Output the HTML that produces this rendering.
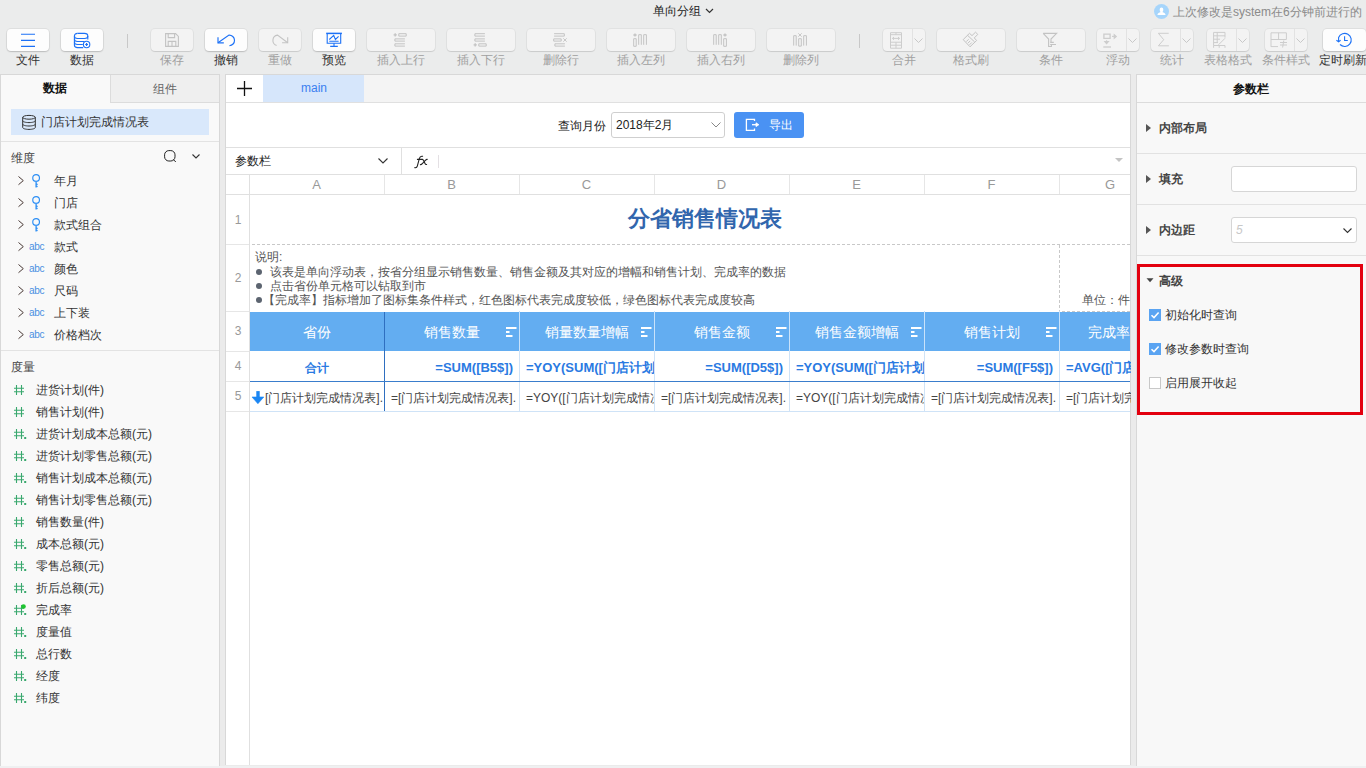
<!DOCTYPE html><html><head><meta charset="utf-8"><style>
*{box-sizing:border-box;margin:0;padding:0}
html,body{width:1366px;height:768px;overflow:hidden;background:#ebebeb;font-family:"Liberation Sans",sans-serif;font-size:12px;color:#333}
.a{position:absolute;white-space:nowrap}
svg.a{overflow:visible}
</style></head><body><div class="a" style="left:0px;top:0px;width:1366px;height:74px;background:#ebecec"></div>
<div class="a" style="left:577px;width:200px;text-align:center;top:1px;height:20px;line-height:20px;font-size:12px;color:#222;font-weight:normal;">单向分组</div>
<svg class="a" style="left:705px;top:8px;" width="9" height="6" viewBox="0 0 9 6"><path d="M1 1L4.5 4.5L8 1" fill="none" stroke="#333" stroke-width="1.2"/></svg>
<svg class="a" style="left:1154px;top:4px;" width="15" height="15" viewBox="0 0 15 15"><circle cx="7.5" cy="7.5" r="7.5" fill="#a6d5fb"/><path d="M7.5 3.6c1.1 0 1.8.9 1.8 2.1 0 1-.5 1.9-1 2.4 1.6.4 3 1.3 3.3 3H3.4c.3-1.7 1.7-2.6 3.3-3-.5-.5-1-1.4-1-2.4 0-1.2.7-2.1 1.8-2.1z" fill="#fff"/></svg>
<div class="a " style="left:1173px;top:2px;height:20px;line-height:20px;font-size:12px;color:#8a8a8a;font-weight:normal;">上次修改是system在6分钟前进行的</div>
<div class="a" style="left:7px;top:29px;width:42px;height:22px;background:#fdfdfd;border-radius:4px;box-shadow:0 0 0 1px rgba(0,0,0,.05),0 1px 1.5px rgba(0,0,0,.16)"></div>
<div class="a" style="left:-72.0px;width:200px;text-align:center;top:50px;height:20px;line-height:20px;font-size:12px;color:#333;font-weight:normal;">文件</div>
<div class="a" style="left:61px;top:29px;width:42px;height:22px;background:#fdfdfd;border-radius:4px;box-shadow:0 0 0 1px rgba(0,0,0,.05),0 1px 1.5px rgba(0,0,0,.16)"></div>
<div class="a" style="left:-18.0px;width:200px;text-align:center;top:50px;height:20px;line-height:20px;font-size:12px;color:#333;font-weight:normal;">数据</div>
<div class="a" style="left:151px;top:29px;width:42px;height:22px;background:#f3f3f3;border-radius:4px;box-shadow:0 0 0 1px rgba(0,0,0,.04),0 1px 1px rgba(0,0,0,.10)"></div>
<div class="a" style="left:72.0px;width:200px;text-align:center;top:50px;height:20px;line-height:20px;font-size:12px;color:#a0a0a0;font-weight:normal;">保存</div>
<div class="a" style="left:205px;top:29px;width:42px;height:22px;background:#fdfdfd;border-radius:4px;box-shadow:0 0 0 1px rgba(0,0,0,.05),0 1px 1.5px rgba(0,0,0,.16)"></div>
<div class="a" style="left:126.0px;width:200px;text-align:center;top:50px;height:20px;line-height:20px;font-size:12px;color:#333;font-weight:normal;">撤销</div>
<div class="a" style="left:259px;top:29px;width:42px;height:22px;background:#f3f3f3;border-radius:4px;box-shadow:0 0 0 1px rgba(0,0,0,.04),0 1px 1px rgba(0,0,0,.10)"></div>
<div class="a" style="left:180.0px;width:200px;text-align:center;top:50px;height:20px;line-height:20px;font-size:12px;color:#a0a0a0;font-weight:normal;">重做</div>
<div class="a" style="left:313px;top:29px;width:42px;height:22px;background:#fdfdfd;border-radius:4px;box-shadow:0 0 0 1px rgba(0,0,0,.05),0 1px 1.5px rgba(0,0,0,.16)"></div>
<div class="a" style="left:234.0px;width:200px;text-align:center;top:50px;height:20px;line-height:20px;font-size:12px;color:#333;font-weight:normal;">预览</div>
<div class="a" style="left:367px;top:29px;width:68px;height:22px;background:#f3f3f3;border-radius:4px;box-shadow:0 0 0 1px rgba(0,0,0,.04),0 1px 1px rgba(0,0,0,.10)"></div>
<div class="a" style="left:301.0px;width:200px;text-align:center;top:50px;height:20px;line-height:20px;font-size:12px;color:#a0a0a0;font-weight:normal;">插入上行</div>
<div class="a" style="left:447px;top:29px;width:68px;height:22px;background:#f3f3f3;border-radius:4px;box-shadow:0 0 0 1px rgba(0,0,0,.04),0 1px 1px rgba(0,0,0,.10)"></div>
<div class="a" style="left:381.0px;width:200px;text-align:center;top:50px;height:20px;line-height:20px;font-size:12px;color:#a0a0a0;font-weight:normal;">插入下行</div>
<div class="a" style="left:527px;top:29px;width:68px;height:22px;background:#f3f3f3;border-radius:4px;box-shadow:0 0 0 1px rgba(0,0,0,.04),0 1px 1px rgba(0,0,0,.10)"></div>
<div class="a" style="left:461.0px;width:200px;text-align:center;top:50px;height:20px;line-height:20px;font-size:12px;color:#a0a0a0;font-weight:normal;">删除行</div>
<div class="a" style="left:607px;top:29px;width:68px;height:22px;background:#f3f3f3;border-radius:4px;box-shadow:0 0 0 1px rgba(0,0,0,.04),0 1px 1px rgba(0,0,0,.10)"></div>
<div class="a" style="left:541.0px;width:200px;text-align:center;top:50px;height:20px;line-height:20px;font-size:12px;color:#a0a0a0;font-weight:normal;">插入左列</div>
<div class="a" style="left:687px;top:29px;width:68px;height:22px;background:#f3f3f3;border-radius:4px;box-shadow:0 0 0 1px rgba(0,0,0,.04),0 1px 1px rgba(0,0,0,.10)"></div>
<div class="a" style="left:621.0px;width:200px;text-align:center;top:50px;height:20px;line-height:20px;font-size:12px;color:#a0a0a0;font-weight:normal;">插入右列</div>
<div class="a" style="left:767px;top:29px;width:68px;height:22px;background:#f3f3f3;border-radius:4px;box-shadow:0 0 0 1px rgba(0,0,0,.04),0 1px 1px rgba(0,0,0,.10)"></div>
<div class="a" style="left:701.0px;width:200px;text-align:center;top:50px;height:20px;line-height:20px;font-size:12px;color:#a0a0a0;font-weight:normal;">删除列</div>
<div class="a" style="left:883px;top:29px;width:42px;height:22px;background:#f3f3f3;border-radius:4px;box-shadow:0 0 0 1px rgba(0,0,0,.04),0 1px 1px rgba(0,0,0,.10)"></div>
<div class="a" style="left:912px;top:29px;width:1px;height:22px;background:#e2e2e2"></div>
<svg class="a" style="left:914px;top:38px;" width="9" height="5" viewBox="0 0 9 5"><path d="M.5 .5L4.5 4.5L8.5 .5" fill="none" stroke="#c8c8c8" stroke-width="1"/></svg>
<div class="a" style="left:804.0px;width:200px;text-align:center;top:50px;height:20px;line-height:20px;font-size:12px;color:#a0a0a0;font-weight:normal;">合并</div>
<div class="a" style="left:937px;top:29px;width:68px;height:22px;background:#f3f3f3;border-radius:4px;box-shadow:0 0 0 1px rgba(0,0,0,.04),0 1px 1px rgba(0,0,0,.10)"></div>
<div class="a" style="left:871.0px;width:200px;text-align:center;top:50px;height:20px;line-height:20px;font-size:12px;color:#a0a0a0;font-weight:normal;">格式刷</div>
<div class="a" style="left:1017px;top:29px;width:68px;height:22px;background:#f3f3f3;border-radius:4px;box-shadow:0 0 0 1px rgba(0,0,0,.04),0 1px 1px rgba(0,0,0,.10)"></div>
<div class="a" style="left:951.0px;width:200px;text-align:center;top:50px;height:20px;line-height:20px;font-size:12px;color:#a0a0a0;font-weight:normal;">条件</div>
<div class="a" style="left:1097px;top:29px;width:42px;height:22px;background:#f3f3f3;border-radius:4px;box-shadow:0 0 0 1px rgba(0,0,0,.04),0 1px 1px rgba(0,0,0,.10)"></div>
<div class="a" style="left:1126px;top:29px;width:1px;height:22px;background:#e2e2e2"></div>
<svg class="a" style="left:1128px;top:38px;" width="9" height="5" viewBox="0 0 9 5"><path d="M.5 .5L4.5 4.5L8.5 .5" fill="none" stroke="#c8c8c8" stroke-width="1"/></svg>
<div class="a" style="left:1018.0px;width:200px;text-align:center;top:50px;height:20px;line-height:20px;font-size:12px;color:#a0a0a0;font-weight:normal;">浮动</div>
<div class="a" style="left:1151px;top:29px;width:42px;height:22px;background:#f3f3f3;border-radius:4px;box-shadow:0 0 0 1px rgba(0,0,0,.04),0 1px 1px rgba(0,0,0,.10)"></div>
<div class="a" style="left:1180px;top:29px;width:1px;height:22px;background:#e2e2e2"></div>
<svg class="a" style="left:1182px;top:38px;" width="9" height="5" viewBox="0 0 9 5"><path d="M.5 .5L4.5 4.5L8.5 .5" fill="none" stroke="#c8c8c8" stroke-width="1"/></svg>
<div class="a" style="left:1072.0px;width:200px;text-align:center;top:50px;height:20px;line-height:20px;font-size:12px;color:#a0a0a0;font-weight:normal;">统计</div>
<div class="a" style="left:1207px;top:29px;width:42px;height:22px;background:#f3f3f3;border-radius:4px;box-shadow:0 0 0 1px rgba(0,0,0,.04),0 1px 1px rgba(0,0,0,.10)"></div>
<div class="a" style="left:1236px;top:29px;width:1px;height:22px;background:#e2e2e2"></div>
<svg class="a" style="left:1238px;top:38px;" width="9" height="5" viewBox="0 0 9 5"><path d="M.5 .5L4.5 4.5L8.5 .5" fill="none" stroke="#c8c8c8" stroke-width="1"/></svg>
<div class="a" style="left:1128.0px;width:200px;text-align:center;top:50px;height:20px;line-height:20px;font-size:12px;color:#a0a0a0;font-weight:normal;">表格格式</div>
<div class="a" style="left:1265px;top:29px;width:42px;height:22px;background:#f3f3f3;border-radius:4px;box-shadow:0 0 0 1px rgba(0,0,0,.04),0 1px 1px rgba(0,0,0,.10)"></div>
<div class="a" style="left:1294px;top:29px;width:1px;height:22px;background:#e2e2e2"></div>
<svg class="a" style="left:1296px;top:38px;" width="9" height="5" viewBox="0 0 9 5"><path d="M.5 .5L4.5 4.5L8.5 .5" fill="none" stroke="#c8c8c8" stroke-width="1"/></svg>
<div class="a" style="left:1186.0px;width:200px;text-align:center;top:50px;height:20px;line-height:20px;font-size:12px;color:#a0a0a0;font-weight:normal;">条件样式</div>
<div class="a" style="left:1323px;top:29px;width:43px;height:22px;background:#fdfdfd;border-radius:4px;box-shadow:0 0 0 1px rgba(0,0,0,.05),0 1px 1.5px rgba(0,0,0,.16)"></div>
<div class="a" style="left:1243px;width:200px;text-align:center;top:50px;height:20px;line-height:20px;font-size:12px;color:#333;font-weight:normal;">定时刷新</div>
<div class="a" style="left:127px;top:34px;width:1px;height:14px;background:#c8c8c8"></div>
<div class="a" style="left:859px;top:34px;width:1px;height:14px;background:#c8c8c8"></div>
<svg class="a" style="left:21px;top:33px;" width="14" height="14" viewBox="0 0 14 14"><path d="M0 1.2H14M0 7.4H14M0 13.4H14" stroke="#1c71f6" stroke-width="1.1"/></svg>
<svg class="a" style="left:68px;top:29px;" width="30" height="22" viewBox="0 0 30 22"><g fill="none" stroke="#1c71f6" stroke-width="1.1"><path d="M9.5 4.4H16.4Q19.8 4.4 19.8 7V10.6"/><path d="M9.5 4.4Q6.4 4.4 6.4 7V16Q6.4 18.6 9.5 18.6H15.2"/><path d="M6.4 7Q6.4 9.5 9.5 9.5H16.6Q19.8 9.5 19.8 7"/><path d="M6.4 10Q6.4 12.5 9.5 12.5H16.5"/><path d="M6.4 13Q6.4 15.5 9.5 15.5H14.8"/><circle cx="18.6" cy="15.5" r="3.2" fill="#fdfdfd"/><path d="M18.6 14.1V16.9M17.2 15.5H20" stroke-width="1.2"/></g></svg>
<svg class="a" style="left:165px;top:33px;" width="14" height="14" viewBox="0 0 14 14"><g fill="none" stroke="#c3c3c3" stroke-width="1.1"><path d="M.6 .6H10.6L13.4 3.4V13.4H.6Z"/><path d="M3.2 .6V4.6H9.6V.6M3.2 13.4V8.4H10.8V13.4M7 8.4V13.4"/></g></svg>
<svg class="a" style="left:210px;top:30px;" width="30" height="20" viewBox="0 0 30 20"><g fill="none" stroke="#1c71f6" stroke-width="1.15"><path d="M8 12.8L19 5.1A5.3 5.3 0 0 1 19.4 15.7"/><path d="M8 7.2V12.8H13.8"/></g></svg>
<svg class="a" style="left:264px;top:30px;" width="30" height="20" viewBox="0 0 30 20"><g fill="none" stroke="#c3c3c3" stroke-width="1.1"><path d="M12.6 15.4A5.3 5.3 0 0 1 13.5 5.1L23.7 12.8"/><path d="M23.7 7.2V12.8H18.1"/></g></svg>
<svg class="a" style="left:320px;top:30px;" width="26" height="20" viewBox="0 0 26 20"><g fill="none" stroke="#1c71f6" stroke-width="1.1"><path d="M6.2 3.4H21.9" stroke-width="1.5"/><path d="M7.2 3.4V13.3H20.7V3.4"/><path d="M9.3 9.5L13.7 5.4L15.4 9.5L18.6 6.3M9.3 11.3H18.6M14 13.3V16.3M10.2 16.4H17.8"/></g></svg>
<svg class="a" style="left:385px;top:29px;" width="30" height="22" viewBox="0 0 30 22"><g fill="none" stroke="#c3c3c3" stroke-width="1.0"><path d="M13.8 4.7H21.2V7.1H13.8Z"/><path d="M19.9 9.9H9.9V12.1H19.9"/><path d="M19.9 14.8H9.9V17.1H19.9"/><path d="M8.6 5.9H11.799999999999999M10.2 4.300000000000001V7.5" stroke-width="1.3"/></g></svg>
<svg class="a" style="left:465px;top:29px;" width="30" height="22" viewBox="0 0 30 22"><g fill="none" stroke="#c3c3c3" stroke-width="1.0"><path d="M19.9 4.7H9.9V7.1H19.9"/><path d="M19.9 9.9H9.9V12.1H19.9"/><path d="M13.8 14.8H21.2V17.1H13.8Z"/><path d="M8.6 15.9H11.799999999999999M10.2 14.3V17.5" stroke-width="1.3"/></g></svg>
<svg class="a" style="left:545px;top:29px;" width="30" height="22" viewBox="0 0 30 22"><g fill="none" stroke="#c3c3c3" stroke-width="1.0"><path d="M9.1 4.7H19.3V7.1H9.1"/><path d="M8.7 9.9H16.2V12.1H8.7Z"/><path d="M18.3 9.3L21.7 12.7M21.7 9.3L18.3 12.7" stroke-width="0.9"/><path d="M19.9 14.8H9.9V17.1H19.9"/></g></svg>
<svg class="a" style="left:625px;top:29px;" width="30" height="22" viewBox="0 0 30 22"><g fill="none" stroke="#c3c3c3" stroke-width="1.0"><path d="M8.4 6H11.6M10 4.4V7.6" stroke-width="1.3"/><path d="M8.7 9.7H11.2V17.3H8.7Z"/><path d="M13.7 15.8V5.7H16.3V15.8"/><path d="M18.7 15.8V5.7H21.4V15.8"/></g></svg>
<svg class="a" style="left:705px;top:29px;" width="30" height="22" viewBox="0 0 30 22"><g fill="none" stroke="#c3c3c3" stroke-width="1.0"><path d="M8.7 15.8V5.7H11.2V15.8"/><path d="M13.7 15.8V5.7H16.3V15.8"/><path d="M18.4 6H21.6M20 4.4V7.6" stroke-width="1.3"/><path d="M18.7 9.7H21.4V17.3H18.7Z"/></g></svg>
<svg class="a" style="left:785px;top:29px;" width="30" height="22" viewBox="0 0 30 22"><g fill="none" stroke="#c3c3c3" stroke-width="1.0"><path d="M8.7 16.6V6.7H11.2V16.6"/><path d="M13.3 4.3L16.7 7.7M16.7 4.3L13.3 7.7" stroke-width="0.9"/><path d="M13.7 9.7H16.3V17.1H13.7Z"/><path d="M18.7 16.6V6.7H21.4V16.6"/></g></svg>
<svg class="a" style="left:885px;top:29px;" width="20" height="22" viewBox="0 0 20 22"><g fill="none" stroke="#cdcdcd" stroke-width="1.0"><path d="M5.5 3.7H16.5V19.2H5.5Z"/><path d="M5.5 5.7H16.5M5.5 13.2H16.5M5.5 16.2H16.5M11 3.7V5.7M11 13.2V19.2M7.5 9.4H14.5M7.5 9.4L9 8M7.5 9.4L9 10.8M14.5 9.4L13 8M14.5 9.4L13 10.8"/></g></svg>
<svg class="a" style="left:958px;top:29px;" width="24" height="22" viewBox="0 0 24 22"><g fill="none" stroke="#c3c3c3" stroke-width="1.0"><path d="M5.2 10.6L11.5 4.3L14 6.6L17.5 3.2L19.8 5.4L16.3 8.9L18.6 11.5L12 17.8Z"/><path d="M9.5 6.3L16.6 12.9M8.3 12.6L10.6 10.3M9.9 14.2L12.2 11.9M11.5 15.8L13.8 13.5"/></g></svg>
<svg class="a" style="left:1038px;top:29px;" width="24" height="22" viewBox="0 0 24 22"><g fill="none" stroke="#c3c3c3" stroke-width="1.1"><path d="M5.2 4.4H18.6L13 10V13"/><path d="M5.2 4.4L10.6 10V17.5H13.4V15.6"/><path d="M12.2 13.4H15.8M12.2 15.5H18"/></g></svg>
<svg class="a" style="left:1098px;top:29px;" width="24" height="22" viewBox="0 0 24 22"><g fill="none" stroke="#cdcdcd" stroke-width="1.1"><path d="M5.9 5.2H12.1V9.3H5.9Z" stroke-width="1.3"/><path d="M14 7.4H16.5"/><path d="M16.2 5.6L18.3 7.4L16.2 9.2Z" fill="#cdcdcd"/><path d="M8.6 11.3V13"/><path d="M6.8 12.6L8.6 14.6L10.4 12.6Z" fill="#cdcdcd"/><path d="M5.3 18H13" stroke-width="1.3"/></g></svg>
<svg class="a" style="left:1150px;top:29px;" width="24" height="22" viewBox="0 0 24 22"><g fill="none" stroke="#cdcdcd" stroke-width="1.0"><path d="M18.7 4.3H8.4L13.7 10.7L8.4 16.8H18.9"/></g></svg>
<svg class="a" style="left:1206px;top:29px;" width="24" height="22" viewBox="0 0 24 22"><g fill="none" stroke="#cdcdcd" stroke-width="1.0"><path d="M7.6 3.4V16.5M7.6 3.4H19M7.6 6.8H19M7.6 10.2H14M7.6 13.6H12M11.2 3.4V13.6M19 3.4V8.6M12.5 15.8L19 9.3M7.6 16.5H19M7.6 18.8V16.5M13.2 16.5V18.8M19 16.5V18.8"/></g></svg>
<svg class="a" style="left:1264px;top:29px;" width="24" height="22" viewBox="0 0 24 22"><g fill="none" stroke="#cdcdcd" stroke-width="1.0"><path d="M7 17.8V3.8H22.4M7 10.5H22.4M14.6 3.8V10.5M22.4 3.8V10.5M7 17.6H14"/><path d="M16 13.5H23M16 16H23M19.8 11.5L18.6 18.5"/></g></svg>
<svg class="a" style="left:1330px;top:29px;" width="30" height="22" viewBox="0 0 30 22"><g fill="none" stroke="#1c71f6" stroke-width="1.1"><path d="M10 15.5A6.55 6.55 0 1 0 8.6 8.5L8.6 12.3"/><path d="M6.4 11.2L8.6 12.7L10.6 11.2"/><path d="M14.6 7.2V11.5H17.8"/></g></svg>
<div class="a" style="left:0px;top:74px;width:220px;height:692px;background:#f9f9f9;border:1px solid #d8d8d8;border-bottom:none"></div>
<div class="a" style="left:110px;top:75px;width:109px;height:28px;background:#efefef;border-left:1px solid #dcdcdc;border-bottom:1px solid #dcdcdc"></div>
<div class="a" style="left:-45px;width:200px;text-align:center;top:78px;height:20px;line-height:20px;font-size:12px;color:#111;font-weight:bold;">数据</div>
<div class="a" style="left:65px;width:200px;text-align:center;top:79px;height:20px;line-height:20px;font-size:12px;color:#666;font-weight:normal;">组件</div>
<div class="a" style="left:11px;top:109px;width:198px;height:26px;background:#d9e8fb"></div>
<svg class="a" style="left:22px;top:115px;" width="14" height="15" viewBox="0 0 14 15"><g fill="none" stroke="#333" stroke-width="1"><ellipse cx="7" cy="2.3" rx="6.3" ry="1.9"/><path d="M.7 2.3V12.5c0 1.05 2.8 1.9 6.3 1.9s6.3-.85 6.3-1.9V2.3M.7 5.7c0 1.05 2.8 1.9 6.3 1.9s6.3-.85 6.3-1.9M.7 9.1c0 1.05 2.8 1.9 6.3 1.9s6.3-.85 6.3-1.9"/></g></svg>
<div class="a " style="left:41px;top:112px;height:20px;line-height:20px;font-size:12px;color:#333;font-weight:normal;">门店计划完成情况表</div>
<div class="a" style="left:1px;top:141px;width:218px;height:1px;background:#e3e3e3"></div>
<div class="a " style="left:11px;top:148px;height:20px;line-height:20px;font-size:12px;color:#444;font-weight:normal;">维度</div>
<svg class="a" style="left:164px;top:150px;" width="13" height="13" viewBox="0 0 13 13"><g fill="none" stroke="#222" stroke-width="1"><rect x="0.6" y="0.6" width="10.4" height="10.4" rx="4.2"/><path d="M9.2 9.4L11.8 12"/></g></svg>
<svg class="a" style="left:192px;top:154px;" width="8" height="5" viewBox="0 0 8 5"><path d="M.5 .5L4 4L7.5 .5" fill="none" stroke="#333" stroke-width="1.1"/></svg>
<svg class="a" style="left:18px;top:176px;" width="7" height="10" viewBox="0 0 7 10"><path d="M.5 .5L5.3 4.6L.5 8.7" fill="none" stroke="#4a3a36" stroke-width="1"/></svg>
<svg class="a" style="left:31px;top:174px;" width="9" height="14" viewBox="0 0 9 14"><g fill="none" stroke="#2b8ef5" stroke-width="1.15"><circle cx="5.1" cy="3.9" r="3.35"/><path d="M5.1 7.2V13.6" stroke-width="1.3"/><path d="M5.1 9.9L6.6 10.6M5.1 12L6.6 12.7" stroke-width="1.2"/></g></svg>
<div class="a " style="left:54px;top:171px;height:20px;line-height:20px;font-size:12px;color:#333;font-weight:normal;">年月</div>
<svg class="a" style="left:18px;top:198px;" width="7" height="10" viewBox="0 0 7 10"><path d="M.5 .5L5.3 4.6L.5 8.7" fill="none" stroke="#4a3a36" stroke-width="1"/></svg>
<svg class="a" style="left:31px;top:196px;" width="9" height="14" viewBox="0 0 9 14"><g fill="none" stroke="#2b8ef5" stroke-width="1.15"><circle cx="5.1" cy="3.9" r="3.35"/><path d="M5.1 7.2V13.6" stroke-width="1.3"/><path d="M5.1 9.9L6.6 10.6M5.1 12L6.6 12.7" stroke-width="1.2"/></g></svg>
<div class="a " style="left:54px;top:193px;height:20px;line-height:20px;font-size:12px;color:#333;font-weight:normal;">门店</div>
<svg class="a" style="left:18px;top:220px;" width="7" height="10" viewBox="0 0 7 10"><path d="M.5 .5L5.3 4.6L.5 8.7" fill="none" stroke="#4a3a36" stroke-width="1"/></svg>
<svg class="a" style="left:31px;top:218px;" width="9" height="14" viewBox="0 0 9 14"><g fill="none" stroke="#2b8ef5" stroke-width="1.15"><circle cx="5.1" cy="3.9" r="3.35"/><path d="M5.1 7.2V13.6" stroke-width="1.3"/><path d="M5.1 9.9L6.6 10.6M5.1 12L6.6 12.7" stroke-width="1.2"/></g></svg>
<div class="a " style="left:54px;top:215px;height:20px;line-height:20px;font-size:12px;color:#333;font-weight:normal;">款式组合</div>
<svg class="a" style="left:18px;top:242px;" width="7" height="10" viewBox="0 0 7 10"><path d="M.5 .5L5.3 4.6L.5 8.7" fill="none" stroke="#4a3a36" stroke-width="1"/></svg>
<div class="a " style="left:29px;top:237px;height:20px;line-height:20px;font-size:10px;color:#4a90e2;font-weight:normal;letter-spacing:-0.3px">abc</div>
<div class="a " style="left:54px;top:237px;height:20px;line-height:20px;font-size:12px;color:#333;font-weight:normal;">款式</div>
<svg class="a" style="left:18px;top:264px;" width="7" height="10" viewBox="0 0 7 10"><path d="M.5 .5L5.3 4.6L.5 8.7" fill="none" stroke="#4a3a36" stroke-width="1"/></svg>
<div class="a " style="left:29px;top:259px;height:20px;line-height:20px;font-size:10px;color:#4a90e2;font-weight:normal;letter-spacing:-0.3px">abc</div>
<div class="a " style="left:54px;top:259px;height:20px;line-height:20px;font-size:12px;color:#333;font-weight:normal;">颜色</div>
<svg class="a" style="left:18px;top:286px;" width="7" height="10" viewBox="0 0 7 10"><path d="M.5 .5L5.3 4.6L.5 8.7" fill="none" stroke="#4a3a36" stroke-width="1"/></svg>
<div class="a " style="left:29px;top:281px;height:20px;line-height:20px;font-size:10px;color:#4a90e2;font-weight:normal;letter-spacing:-0.3px">abc</div>
<div class="a " style="left:54px;top:281px;height:20px;line-height:20px;font-size:12px;color:#333;font-weight:normal;">尺码</div>
<svg class="a" style="left:18px;top:308px;" width="7" height="10" viewBox="0 0 7 10"><path d="M.5 .5L5.3 4.6L.5 8.7" fill="none" stroke="#4a3a36" stroke-width="1"/></svg>
<div class="a " style="left:29px;top:303px;height:20px;line-height:20px;font-size:10px;color:#4a90e2;font-weight:normal;letter-spacing:-0.3px">abc</div>
<div class="a " style="left:54px;top:303px;height:20px;line-height:20px;font-size:12px;color:#333;font-weight:normal;">上下装</div>
<svg class="a" style="left:18px;top:330px;" width="7" height="10" viewBox="0 0 7 10"><path d="M.5 .5L5.3 4.6L.5 8.7" fill="none" stroke="#4a3a36" stroke-width="1"/></svg>
<div class="a " style="left:29px;top:325px;height:20px;line-height:20px;font-size:10px;color:#4a90e2;font-weight:normal;letter-spacing:-0.3px">abc</div>
<div class="a " style="left:54px;top:325px;height:20px;line-height:20px;font-size:12px;color:#333;font-weight:normal;">价格档次</div>
<div class="a" style="left:1px;top:350px;width:218px;height:1px;background:#e3e3e3"></div>
<div class="a " style="left:11px;top:357px;height:20px;line-height:20px;font-size:12px;color:#444;font-weight:normal;">度量</div>
<svg class="a" style="left:14px;top:385px;" width="13" height="10" viewBox="0 0 13 10"><g stroke="#39a86e" stroke-width="1.1"><path d="M2.5 0V10M7.5 0V10M0 3.2H10M0 6.8H10"/></g></svg>
<div class="a " style="left:36px;top:380px;height:20px;line-height:20px;font-size:12px;color:#333;font-weight:normal;">进货计划(件)</div>
<svg class="a" style="left:14px;top:407px;" width="13" height="10" viewBox="0 0 13 10"><g stroke="#39a86e" stroke-width="1.1"><path d="M2.5 0V10M7.5 0V10M0 3.2H10M0 6.8H10"/></g></svg>
<div class="a " style="left:36px;top:402px;height:20px;line-height:20px;font-size:12px;color:#333;font-weight:normal;">销售计划(件)</div>
<svg class="a" style="left:14px;top:429px;" width="13" height="10" viewBox="0 0 13 10"><g stroke="#39a86e" stroke-width="1.1"><path d="M2.5 0V10M7.5 0V10M0 3.2H10M0 6.8H10"/></g><rect x="10.2" y="8" width="2" height="2" fill="#39a86e"/></svg>
<div class="a " style="left:36px;top:424px;height:20px;line-height:20px;font-size:12px;color:#333;font-weight:normal;">进货计划成本总额(元)</div>
<svg class="a" style="left:14px;top:451px;" width="13" height="10" viewBox="0 0 13 10"><g stroke="#39a86e" stroke-width="1.1"><path d="M2.5 0V10M7.5 0V10M0 3.2H10M0 6.8H10"/></g><rect x="10.2" y="8" width="2" height="2" fill="#39a86e"/></svg>
<div class="a " style="left:36px;top:446px;height:20px;line-height:20px;font-size:12px;color:#333;font-weight:normal;">进货计划零售总额(元)</div>
<svg class="a" style="left:14px;top:473px;" width="13" height="10" viewBox="0 0 13 10"><g stroke="#39a86e" stroke-width="1.1"><path d="M2.5 0V10M7.5 0V10M0 3.2H10M0 6.8H10"/></g><rect x="10.2" y="8" width="2" height="2" fill="#39a86e"/></svg>
<div class="a " style="left:36px;top:468px;height:20px;line-height:20px;font-size:12px;color:#333;font-weight:normal;">销售计划成本总额(元)</div>
<svg class="a" style="left:14px;top:495px;" width="13" height="10" viewBox="0 0 13 10"><g stroke="#39a86e" stroke-width="1.1"><path d="M2.5 0V10M7.5 0V10M0 3.2H10M0 6.8H10"/></g><rect x="10.2" y="8" width="2" height="2" fill="#39a86e"/></svg>
<div class="a " style="left:36px;top:490px;height:20px;line-height:20px;font-size:12px;color:#333;font-weight:normal;">销售计划零售总额(元)</div>
<svg class="a" style="left:14px;top:517px;" width="13" height="10" viewBox="0 0 13 10"><g stroke="#39a86e" stroke-width="1.1"><path d="M2.5 0V10M7.5 0V10M0 3.2H10M0 6.8H10"/></g></svg>
<div class="a " style="left:36px;top:512px;height:20px;line-height:20px;font-size:12px;color:#333;font-weight:normal;">销售数量(件)</div>
<svg class="a" style="left:14px;top:539px;" width="13" height="10" viewBox="0 0 13 10"><g stroke="#39a86e" stroke-width="1.1"><path d="M2.5 0V10M7.5 0V10M0 3.2H10M0 6.8H10"/></g><rect x="10.2" y="8" width="2" height="2" fill="#39a86e"/></svg>
<div class="a " style="left:36px;top:534px;height:20px;line-height:20px;font-size:12px;color:#333;font-weight:normal;">成本总额(元)</div>
<svg class="a" style="left:14px;top:561px;" width="13" height="10" viewBox="0 0 13 10"><g stroke="#39a86e" stroke-width="1.1"><path d="M2.5 0V10M7.5 0V10M0 3.2H10M0 6.8H10"/></g><rect x="10.2" y="8" width="2" height="2" fill="#39a86e"/></svg>
<div class="a " style="left:36px;top:556px;height:20px;line-height:20px;font-size:12px;color:#333;font-weight:normal;">零售总额(元)</div>
<svg class="a" style="left:14px;top:583px;" width="13" height="10" viewBox="0 0 13 10"><g stroke="#39a86e" stroke-width="1.1"><path d="M2.5 0V10M7.5 0V10M0 3.2H10M0 6.8H10"/></g><rect x="10.2" y="8" width="2" height="2" fill="#39a86e"/></svg>
<div class="a " style="left:36px;top:578px;height:20px;line-height:20px;font-size:12px;color:#333;font-weight:normal;">折后总额(元)</div>
<svg class="a" style="left:14px;top:605px;" width="13" height="10" viewBox="0 0 13 10"><g stroke="#39a86e" stroke-width="1.1"><path d="M2.5 0V10M7.5 0V10M0 3.2H10M0 6.8H10"/></g><rect x="10.2" y="8" width="2" height="2" fill="#39a86e"/><circle cx="9.5" cy="1.5" r="2.3" fill="#1fc42f"/></svg>
<div class="a " style="left:36px;top:600px;height:20px;line-height:20px;font-size:12px;color:#333;font-weight:normal;">完成率</div>
<svg class="a" style="left:14px;top:627px;" width="13" height="10" viewBox="0 0 13 10"><g stroke="#39a86e" stroke-width="1.1"><path d="M2.5 0V10M7.5 0V10M0 3.2H10M0 6.8H10"/></g><rect x="10.2" y="8" width="2" height="2" fill="#39a86e"/></svg>
<div class="a " style="left:36px;top:622px;height:20px;line-height:20px;font-size:12px;color:#333;font-weight:normal;">度量值</div>
<svg class="a" style="left:14px;top:649px;" width="13" height="10" viewBox="0 0 13 10"><g stroke="#39a86e" stroke-width="1.1"><path d="M2.5 0V10M7.5 0V10M0 3.2H10M0 6.8H10"/></g><rect x="10.2" y="8" width="2" height="2" fill="#39a86e"/></svg>
<div class="a " style="left:36px;top:644px;height:20px;line-height:20px;font-size:12px;color:#333;font-weight:normal;">总行数</div>
<svg class="a" style="left:14px;top:671px;" width="13" height="10" viewBox="0 0 13 10"><g stroke="#39a86e" stroke-width="1.1"><path d="M2.5 0V10M7.5 0V10M0 3.2H10M0 6.8H10"/></g><rect x="10.2" y="8" width="2" height="2" fill="#39a86e"/></svg>
<div class="a " style="left:36px;top:666px;height:20px;line-height:20px;font-size:12px;color:#333;font-weight:normal;">经度</div>
<svg class="a" style="left:14px;top:693px;" width="13" height="10" viewBox="0 0 13 10"><g stroke="#39a86e" stroke-width="1.1"><path d="M2.5 0V10M7.5 0V10M0 3.2H10M0 6.8H10"/></g><rect x="10.2" y="8" width="2" height="2" fill="#39a86e"/></svg>
<div class="a " style="left:36px;top:688px;height:20px;line-height:20px;font-size:12px;color:#333;font-weight:normal;">纬度</div>
<div class="a" style="left:0;top:0;width:1131px;height:765px;overflow:hidden">
<div class="a" style="left:225px;top:74px;width:906px;height:692px;background:#fff;border:1px solid #d8d8d8;border-bottom:none"></div>
<div class="a" style="left:226px;top:75px;width:904px;height:27px;background:#f4f4f4"></div>
<div class="a" style="left:226px;top:75px;width:37px;height:27px;background:#fff"></div>
<svg class="a" style="left:237px;top:81px;" width="15" height="15" viewBox="0 0 15 15"><path d="M7.5 0V15M0 7.5H15" stroke="#111" stroke-width="1.3"/></svg>
<div class="a" style="left:263px;top:75px;width:101px;height:27px;background:#d6e6fb"></div>
<div class="a" style="left:214px;width:200px;text-align:center;top:78px;height:20px;line-height:20px;font-size:12px;color:#3a7ff0;font-weight:normal;">main</div>
<div class="a" style="left:226px;top:102px;width:904px;height:1px;background:#e0e0e0"></div>
<div class="a " style="left:558px;top:116px;height:20px;line-height:20px;font-size:12px;color:#222;font-weight:normal;">查询月份</div>
<div class="a" style="left:611px;top:112px;width:114px;height:26px;background:#fff;border:1px solid #cfcfcf;border-radius:3px"></div>
<div class="a " style="left:616px;top:115px;height:20px;line-height:20px;font-size:12px;color:#222;font-weight:normal;">2018年2月</div>
<svg class="a" style="left:711px;top:122px;" width="10" height="6" viewBox="0 0 10 6"><path d="M.5 .5L5 5L9.5 .5" fill="none" stroke="#888" stroke-width="1"/></svg>
<div class="a" style="left:734px;top:112px;width:70px;height:26px;background:#4a92f3;border-radius:3px"></div>
<svg class="a" style="left:740px;top:112px;" width="22" height="22" viewBox="0 0 22 22"><g fill="none" stroke="#fff" stroke-width="1.3"><path d="M14.5 9V7.4H6.4V18.3H14.5V16.6"/><path d="M12 12.7H16.5"/><path d="M16 10.8L18.9 12.7L16 14.6Z" fill="#fff" stroke-width="0.8"/></g></svg>
<div class="a " style="left:769px;top:115px;height:20px;line-height:20px;font-size:12px;color:#fff;font-weight:normal;">导出</div>
<div class="a" style="left:226px;top:147px;width:904px;height:1px;background:#e0e0e0"></div>
<div class="a " style="left:235px;top:151px;height:20px;line-height:20px;font-size:12px;color:#222;font-weight:normal;">参数栏</div>
<svg class="a" style="left:378px;top:158px;" width="10" height="6" viewBox="0 0 10 6"><path d="M.5 .5L5 5L9.5 .5" fill="none" stroke="#333" stroke-width="1.1"/></svg>
<div class="a" style="left:401px;top:148px;width:1px;height:26px;background:#e0e0e0"></div>
<svg class="a" style="left:405px;top:150px;" width="30" height="22" viewBox="0 0 30 22"><g fill="none" stroke="#222" stroke-width="1.1" stroke-linecap="round"><path d="M17.6 6.3C15.9 5.9 14.9 6.6 14.4 8.4L12.3 16.2C11.9 17.6 11 17.9 9.8 17.6"/><path d="M12.4 9.4H17.6"/><path d="M15.4 14.6C16 14.7 16.6 14.4 17.3 13.6L20.6 10.2C21.2 9.5 21.7 9.3 22.2 9.4"/><path d="M17.2 9.6C17.9 9.4 18.4 9.8 18.8 10.8L20 13.5C20.4 14.4 20.8 14.7 21.6 14.5"/></g></svg>
<div class="a" style="left:438px;top:155px;width:1px;height:13px;background:#e4e0e4"></div>
<svg class="a" style="left:1115px;top:158px;" width="8" height="4" viewBox="0 0 8 4"><path d="M0 0H8L4 4Z" fill="#c4c4c4"/></svg>
<div class="a" style="left:226px;top:174px;width:904px;height:1px;background:#e0e0e0"></div>
<div class="a" style="left:216.5px;width:200px;text-align:center;top:175px;height:20px;line-height:20px;font-size:13px;color:#999;font-weight:normal;">A</div>
<div class="a" style="left:384px;top:175px;width:1px;height:19px;background:#e6e6e6"></div>
<div class="a" style="left:351.5px;width:200px;text-align:center;top:175px;height:20px;line-height:20px;font-size:13px;color:#999;font-weight:normal;">B</div>
<div class="a" style="left:519px;top:175px;width:1px;height:19px;background:#e6e6e6"></div>
<div class="a" style="left:486.5px;width:200px;text-align:center;top:175px;height:20px;line-height:20px;font-size:13px;color:#999;font-weight:normal;">C</div>
<div class="a" style="left:654px;top:175px;width:1px;height:19px;background:#e6e6e6"></div>
<div class="a" style="left:621.5px;width:200px;text-align:center;top:175px;height:20px;line-height:20px;font-size:13px;color:#999;font-weight:normal;">D</div>
<div class="a" style="left:789px;top:175px;width:1px;height:19px;background:#e6e6e6"></div>
<div class="a" style="left:756.5px;width:200px;text-align:center;top:175px;height:20px;line-height:20px;font-size:13px;color:#999;font-weight:normal;">E</div>
<div class="a" style="left:924px;top:175px;width:1px;height:19px;background:#e6e6e6"></div>
<div class="a" style="left:891.5px;width:200px;text-align:center;top:175px;height:20px;line-height:20px;font-size:13px;color:#999;font-weight:normal;">F</div>
<div class="a" style="left:1059px;top:175px;width:1px;height:19px;background:#e6e6e6"></div>
<div class="a" style="left:1010px;width:200px;text-align:center;top:175px;height:20px;line-height:20px;font-size:13px;color:#999;font-weight:normal;">G</div>
<div class="a" style="left:1194px;top:175px;width:1px;height:19px;background:#e6e6e6"></div>
<div class="a" style="left:249px;top:175px;width:1px;height:591px;background:#e0e0e0"></div>
<div class="a" style="left:226px;top:194px;width:904px;height:1px;background:#e0e0e0"></div>
<div class="a" style="left:138px;width:200px;text-align:center;top:209.5px;height:20px;line-height:20px;font-size:12px;color:#999;font-weight:normal;">1</div>
<div class="a" style="left:226px;top:244px;width:23px;height:1px;background:#e6e6e6"></div>
<div class="a" style="left:138px;width:200px;text-align:center;top:267.5px;height:20px;line-height:20px;font-size:12px;color:#999;font-weight:normal;">2</div>
<div class="a" style="left:226px;top:311px;width:23px;height:1px;background:#e6e6e6"></div>
<div class="a" style="left:138px;width:200px;text-align:center;top:321.0px;height:20px;line-height:20px;font-size:12px;color:#999;font-weight:normal;">3</div>
<div class="a" style="left:226px;top:351px;width:23px;height:1px;background:#e6e6e6"></div>
<div class="a" style="left:138px;width:200px;text-align:center;top:356.0px;height:20px;line-height:20px;font-size:12px;color:#999;font-weight:normal;">4</div>
<div class="a" style="left:226px;top:381px;width:23px;height:1px;background:#e6e6e6"></div>
<div class="a" style="left:138px;width:200px;text-align:center;top:386.0px;height:20px;line-height:20px;font-size:12px;color:#999;font-weight:normal;">5</div>
<div class="a" style="left:226px;top:411px;width:23px;height:1px;background:#e6e6e6"></div>
<div class="a" style="left:604.5px;width:200px;text-align:center;top:209px;height:20px;line-height:20px;font-size:22px;color:#3166ad;font-weight:bold;width:400px;left:504.5px">分省销售情况表</div>
<div class="a" style="left:250px;top:244px;width:880px;height:1px;background:repeating-linear-gradient(90deg,transparent 0 2px,#c8c8c8 2px 5px)"></div>
<div class="a " style="left:255px;top:247px;height:20px;line-height:20px;font-size:12px;color:#555;font-weight:normal;">说明:</div>
<div class="a" style="left:256px;top:269px;width:6px;height:6px;background:#5c6470;border-radius:50%"></div>
<div class="a " style="left:270px;top:262px;height:20px;line-height:20px;font-size:12px;color:#555;font-weight:normal;">该表是单向浮动表，按省分组显示销售数量、销售金额及其对应的增幅和销售计划、完成率的数据</div>
<div class="a" style="left:256px;top:283px;width:6px;height:6px;background:#5c6470;border-radius:50%"></div>
<div class="a " style="left:270px;top:276px;height:20px;line-height:20px;font-size:12px;color:#555;font-weight:normal;">点击省份单元格可以钻取到市</div>
<div class="a" style="left:256px;top:297px;width:6px;height:6px;background:#5c6470;border-radius:50%"></div>
<div class="a " style="left:263px;top:290px;height:20px;line-height:20px;font-size:12px;color:#555;font-weight:normal;">【完成率】指标增加了图标集条件样式，红色图标代表完成度较低，绿色图标代表完成度较高</div>
<div class="a" style="left:1059px;top:244px;width:1px;height:67px;background:repeating-linear-gradient(180deg,transparent 0 1px,#c8c8c8 1px 4px,transparent 4px 5px)"></div>
<div class="a " style="left:1082px;top:290px;height:20px;line-height:20px;font-size:12px;color:#555;font-weight:normal;">单位：件</div>
<div class="a" style="left:1060px;top:311px;width:70px;height:1px;background:repeating-linear-gradient(90deg,transparent 0 2px,#c8c8c8 2px 5px)"></div>
<div class="a" style="left:250px;top:312px;width:880px;height:39px;background:#63adf1"></div>
<div class="a" style="left:217px;width:200px;text-align:center;top:322px;height:20px;line-height:20px;font-size:14px;color:#fff;font-weight:normal;">省份</div>
<div class="a" style="left:352px;width:200px;text-align:center;top:322px;height:20px;line-height:20px;font-size:14px;color:#fff;font-weight:normal;">销售数量</div>
<svg class="a" style="left:506px;top:327px;" width="11" height="10" viewBox="0 0 11 10"><path d="M0 1H10.5M0 5H3.5M0 9H6.5" stroke="#fff" stroke-width="2"/></svg>
<div class="a" style="left:487px;width:200px;text-align:center;top:322px;height:20px;line-height:20px;font-size:14px;color:#fff;font-weight:normal;">销量数量增幅</div>
<div class="a" style="left:519px;top:311px;width:1px;height:40px;background:#c9e2fa"></div>
<svg class="a" style="left:641px;top:327px;" width="11" height="10" viewBox="0 0 11 10"><path d="M0 1H10.5M0 5H3.5M0 9H6.5" stroke="#fff" stroke-width="2"/></svg>
<div class="a" style="left:622px;width:200px;text-align:center;top:322px;height:20px;line-height:20px;font-size:14px;color:#fff;font-weight:normal;">销售金额</div>
<div class="a" style="left:654px;top:311px;width:1px;height:40px;background:#c9e2fa"></div>
<svg class="a" style="left:776px;top:327px;" width="11" height="10" viewBox="0 0 11 10"><path d="M0 1H10.5M0 5H3.5M0 9H6.5" stroke="#fff" stroke-width="2"/></svg>
<div class="a" style="left:757px;width:200px;text-align:center;top:322px;height:20px;line-height:20px;font-size:14px;color:#fff;font-weight:normal;">销售金额增幅</div>
<div class="a" style="left:789px;top:311px;width:1px;height:40px;background:#c9e2fa"></div>
<svg class="a" style="left:911px;top:327px;" width="11" height="10" viewBox="0 0 11 10"><path d="M0 1H10.5M0 5H3.5M0 9H6.5" stroke="#fff" stroke-width="2"/></svg>
<div class="a" style="left:892px;width:200px;text-align:center;top:322px;height:20px;line-height:20px;font-size:14px;color:#fff;font-weight:normal;">销售计划</div>
<div class="a" style="left:924px;top:311px;width:1px;height:40px;background:#c9e2fa"></div>
<svg class="a" style="left:1046px;top:327px;" width="11" height="10" viewBox="0 0 11 10"><path d="M0 1H10.5M0 5H3.5M0 9H6.5" stroke="#fff" stroke-width="2"/></svg>
<div class="a" style="left:1009px;width:200px;text-align:center;top:322px;height:20px;line-height:20px;font-size:14px;color:#fff;font-weight:normal;">完成率</div>
<div class="a" style="left:1059px;top:311px;width:1px;height:40px;background:#c9e2fa"></div>
<div class="a" style="left:217px;width:200px;text-align:center;top:358px;height:20px;line-height:20px;font-size:12px;color:#2a7ae2;font-weight:bold;">合计</div>
<div class="a" style="left:385px;width:128px;text-align:right;top:358px;height:20px;line-height:20px;font-size:13px;color:#2a7ae2;font-weight:bold">=SUM([B5$])</div>
<div class="a" style="left:526px;width:128px;overflow:hidden;top:358px;height:20px;line-height:20px;font-size:13px;color:#2a7ae2;font-weight:bold">=YOY(SUM([门店计划完成情况表].</div>
<div class="a" style="left:655px;width:128px;text-align:right;top:358px;height:20px;line-height:20px;font-size:13px;color:#2a7ae2;font-weight:bold">=SUM([D5$])</div>
<div class="a" style="left:796px;width:128px;overflow:hidden;top:358px;height:20px;line-height:20px;font-size:13px;color:#2a7ae2;font-weight:bold">=YOY(SUM([门店计划完成情况表].</div>
<div class="a" style="left:925px;width:128px;text-align:right;top:358px;height:20px;line-height:20px;font-size:13px;color:#2a7ae2;font-weight:bold">=SUM([F5$])</div>
<div class="a" style="left:1066px;width:128px;overflow:hidden;top:358px;height:20px;line-height:20px;font-size:13px;color:#2a7ae2;font-weight:bold">=AVG([门店计划</div>
<div class="a" style="left:265px;width:119px;overflow:hidden;top:388px;height:20px;line-height:20px;font-size:12px;color:#444">[门店计划完成情况表].</div>
<div class="a" style="left:391px;width:128px;overflow:hidden;top:388px;height:20px;line-height:20px;font-size:12px;color:#444">=[门店计划完成情况表].</div>
<div class="a" style="left:526px;width:128px;overflow:hidden;top:388px;height:20px;line-height:20px;font-size:12px;color:#444">=YOY([门店计划完成情况表].</div>
<div class="a" style="left:661px;width:128px;overflow:hidden;top:388px;height:20px;line-height:20px;font-size:12px;color:#444">=[门店计划完成情况表].</div>
<div class="a" style="left:796px;width:128px;overflow:hidden;top:388px;height:20px;line-height:20px;font-size:12px;color:#444">=YOY([门店计划完成情况表].</div>
<div class="a" style="left:931px;width:128px;overflow:hidden;top:388px;height:20px;line-height:20px;font-size:12px;color:#444">=[门店计划完成情况表].</div>
<div class="a" style="left:1066px;width:128px;overflow:hidden;top:388px;height:20px;line-height:20px;font-size:12px;color:#444">=[门店计划完成情况表].</div>
<svg class="a" style="left:248px;top:384px;" width="20" height="22" viewBox="0 0 20 22"><path d="M8.3 7.1H11.7V13.2H8.3Z" fill="#1a86f3"/><path d="M4 13H15.8L9.9 19.7Z" fill="#1a86f3" stroke="#1a86f3" stroke-width="0.6" stroke-linejoin="round"/></svg>
<div class="a" style="left:384px;top:351px;width:1px;height:61px;background:#cfe3f7"></div>
<div class="a" style="left:519px;top:351px;width:1px;height:61px;background:#cfe3f7"></div>
<div class="a" style="left:654px;top:351px;width:1px;height:61px;background:#cfe3f7"></div>
<div class="a" style="left:789px;top:351px;width:1px;height:61px;background:#cfe3f7"></div>
<div class="a" style="left:924px;top:351px;width:1px;height:61px;background:#cfe3f7"></div>
<div class="a" style="left:1059px;top:351px;width:1px;height:61px;background:#cfe3f7"></div>
<div class="a" style="left:384px;top:312px;width:1px;height:100px;background:#2f6fc0"></div>
<div class="a" style="left:250px;top:381px;width:880px;height:1px;background:#3a7dcc"></div>
<div class="a" style="left:250px;top:411px;width:880px;height:1px;background:#cfe3f7"></div>
</div>
<div class="a" style="left:1136px;top:74px;width:230px;height:692px;background:#f8f8f8;border:1px solid #d8d8d8;border-right:none;border-bottom:none"></div>
<div class="a" style="left:1151px;width:200px;text-align:center;top:79px;height:20px;line-height:20px;font-size:12px;color:#111;font-weight:bold;">参数栏</div>
<div class="a" style="left:1137px;top:102px;width:229px;height:1px;background:#dcdcdc"></div>
<svg class="a" style="left:1146px;top:124px;" width="5" height="8" viewBox="0 0 5 8"><path d="M0 0L5 4L0 8Z" fill="#555"/></svg>
<div class="a " style="left:1159px;top:118px;height:20px;line-height:20px;font-size:12px;color:#444;font-weight:bold;">内部布局</div>
<div class="a" style="left:1137px;top:153px;width:229px;height:1px;background:#e2e2e2"></div>
<svg class="a" style="left:1146px;top:175px;" width="5" height="8" viewBox="0 0 5 8"><path d="M0 0L5 4L0 8Z" fill="#555"/></svg>
<div class="a " style="left:1159px;top:169px;height:20px;line-height:20px;font-size:12px;color:#444;font-weight:bold;">填充</div>
<div class="a" style="left:1231px;top:166px;width:126px;height:26px;background:#fff;border:1px solid #d6d6d6;border-radius:3px"></div>
<div class="a" style="left:1137px;top:204px;width:229px;height:1px;background:#e2e2e2"></div>
<svg class="a" style="left:1146px;top:226px;" width="5" height="8" viewBox="0 0 5 8"><path d="M0 0L5 4L0 8Z" fill="#555"/></svg>
<div class="a " style="left:1159px;top:220px;height:20px;line-height:20px;font-size:12px;color:#444;font-weight:bold;">内边距</div>
<div class="a" style="left:1231px;top:217px;width:126px;height:26px;background:#fff;border:1px solid #d6d6d6;border-radius:3px"></div>
<div class="a " style="left:1236px;top:220px;height:20px;line-height:20px;font-size:12px;color:#c8c8c8;font-weight:normal;font-style:italic">5</div>
<svg class="a" style="left:1343px;top:228px;" width="9" height="5" viewBox="0 0 9 5"><path d="M.5 .5L4.5 4.5L8.5 .5" fill="none" stroke="#333" stroke-width="1.1"/></svg>
<div class="a" style="left:1137px;top:255px;width:229px;height:1px;background:#e2e2e2"></div>
<div class="a" style="left:1137px;top:264px;width:226px;height:151px;border:3px solid #e3000f"></div>
<svg class="a" style="left:1146px;top:278px;" width="8" height="5" viewBox="0 0 8 5"><path d="M.5 .3H7.5L4 4.3Z" fill="#444"/></svg>
<div class="a " style="left:1159px;top:271px;height:20px;line-height:20px;font-size:12px;color:#444;font-weight:bold;">高级</div>
<svg class="a" style="left:1149px;top:309px;" width="12" height="12" viewBox="0 0 12 12"><rect width="12" height="12" fill="#5aa4f2"/><path d="M2.5 6.2L5 8.6L9.6 3.6" fill="none" stroke="#fff" stroke-width="1.5"/></svg>
<div class="a " style="left:1165px;top:305px;height:20px;line-height:20px;font-size:12px;color:#333;font-weight:normal;">初始化时查询</div>
<svg class="a" style="left:1149px;top:343px;" width="12" height="12" viewBox="0 0 12 12"><rect width="12" height="12" fill="#5aa4f2"/><path d="M2.5 6.2L5 8.6L9.6 3.6" fill="none" stroke="#fff" stroke-width="1.5"/></svg>
<div class="a " style="left:1165px;top:339px;height:20px;line-height:20px;font-size:12px;color:#333;font-weight:normal;">修改参数时查询</div>
<div class="a" style="left:1149px;top:377px;width:12px;height:12px;background:#fff;border:1px solid #c8c8c8"></div>
<div class="a " style="left:1165px;top:373px;height:20px;line-height:20px;font-size:12px;color:#333;font-weight:normal;">启用展开收起</div>
<div class="a" style="left:0px;top:766px;width:1366px;height:2px;background:#eff0f1"></div></body></html>
